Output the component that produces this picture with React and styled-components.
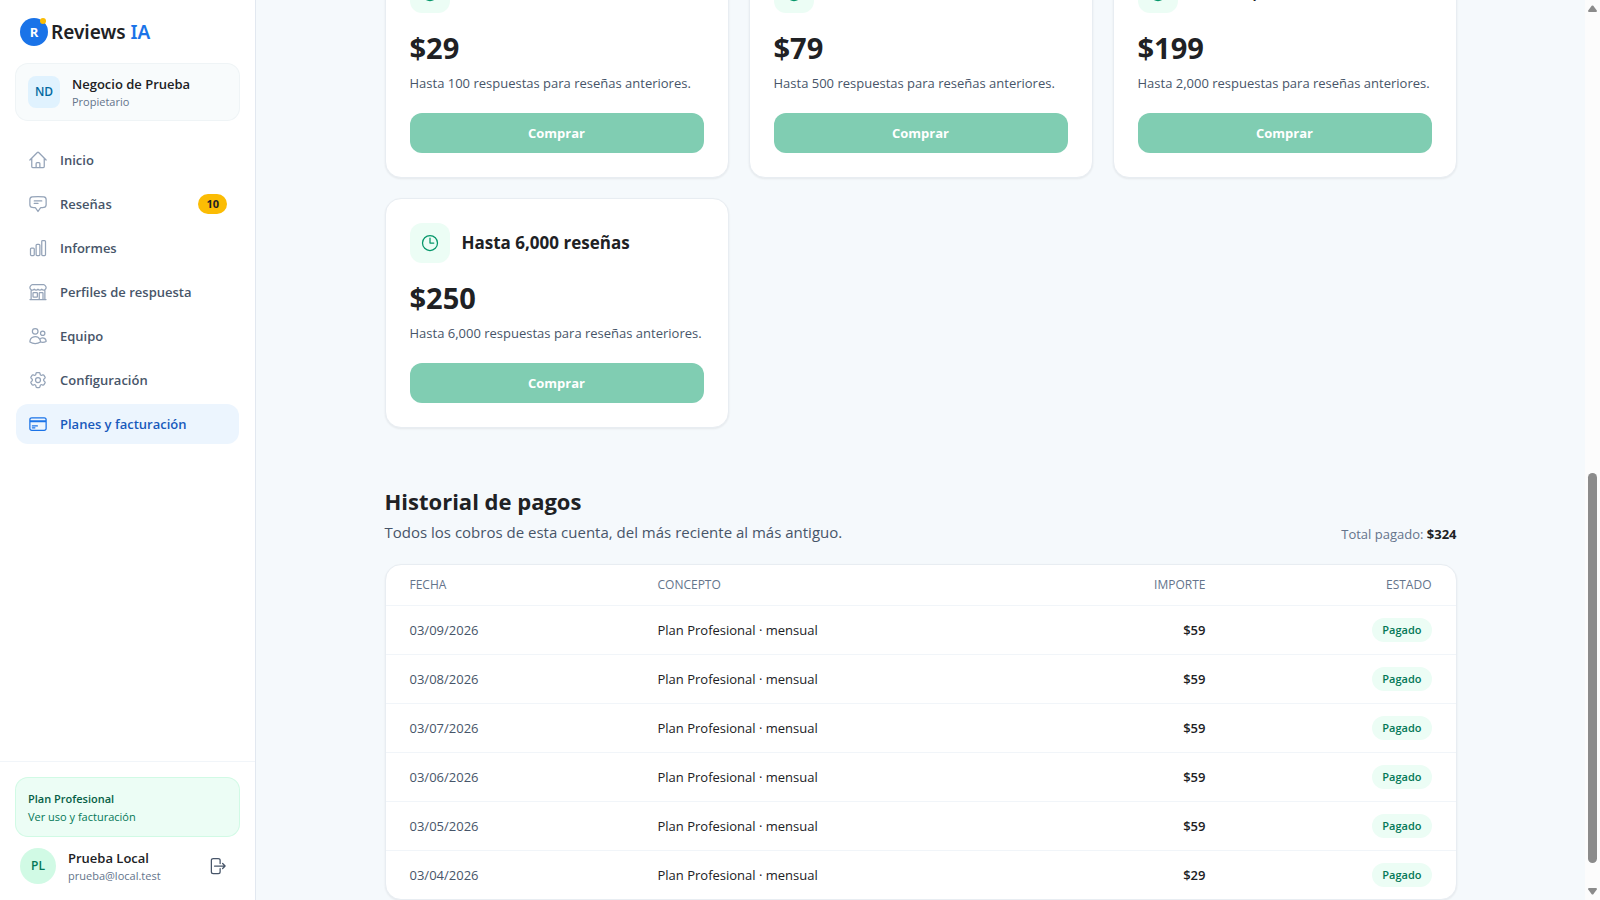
import styled, { createGlobalStyle } from "styled-components"

import {
  HiOutlineArrowRightOnRectangle,
  HiOutlineBuildingStorefront,
  HiOutlineChartBar,
  HiOutlineChatBubbleBottomCenterText,
  HiOutlineClock,
  HiOutlineCog6Tooth,
  HiOutlineCreditCard,
  HiOutlineHome,
  HiOutlineUsers
} from "react-icons/hi2"


const links = [
  { label: "Inicio", Icon: HiOutlineHome },
  { label: "Reseñas", Icon: HiOutlineChatBubbleBottomCenterText, count: 10 },
  { label: "Informes", Icon: HiOutlineChartBar },
  { label: "Perfiles de respuesta", Icon: HiOutlineBuildingStorefront },
  { label: "Equipo", Icon: HiOutlineUsers },
  { label: "Configuración", Icon: HiOutlineCog6Tooth },
  { label: "Planes y facturación", Icon: HiOutlineCreditCard, active: true }
]

const packs = [
  { amount: "100", price: "$29" },
  { amount: "500", price: "$79" },
  { amount: "2,000", price: "$199" },
  { amount: "6,000", price: "$250" }
]

const payments = [
  { date: "03/09/2026", total: "$59" },
  { date: "03/08/2026", total: "$59" },
  { date: "03/07/2026", total: "$59" },
  { date: "03/06/2026", total: "$59" },
  { date: "03/05/2026", total: "$59" },
  { date: "03/04/2026", total: "$29" }
]


const Sidebar = () => {

  return (

    <SidebarStyle>

      <Logo href="#inicio">

        <LogoMark>R</LogoMark>

        <LogoText>Reviews <span>IA</span></LogoText>

      </Logo>

      <Business>

        <BusinessInitials>ND</BusinessInitials>

        <div>
          <Name>Negocio de Prueba</Name>
          <Detail>Propietario</Detail>
        </div>

      </Business>

      <Nav>

        {links.map(({ label, Icon, count, active }) => (

          <NavLink key={label} href="#" $active={active} aria-current={active ? "page" : undefined}>
            <Icon />
            {label}
            {count && <Count>{count}</Count>}
          </NavLink>

        ))}

      </Nav>

      <SidebarFooter>

        <PlanLink href="#">
          <strong>Plan Profesional</strong>
          <span>Ver uso y facturación</span>
        </PlanLink>

        <User>

          <UserInitials>PL</UserInitials>

          <div>
            <Name>Prueba Local</Name>
            <Detail>prueba@local.test</Detail>
          </div>

          <LogoutButton type="button" aria-label="Cerrar sesión">
            <HiOutlineArrowRightOnRectangle />
          </LogoutButton>

        </User>

      </SidebarFooter>

    </SidebarStyle>

  )

}


const PackCard = ({ amount, price }) => {

  return (

    <Card>

      <CardHead>
        <CardIcon><HiOutlineClock /></CardIcon>
        <h3>Hasta {amount} reseñas</h3>
      </CardHead>

      <Price>{price}</Price>

      <Description>Hasta {amount} respuestas para reseñas anteriores.</Description>

      <BuyButton type="button">Comprar</BuyButton>

    </Card>

  )

}


const History = () => {

  return (

    <HistoryStyle>

      <HistoryHead>

        <div>
          <h2>Historial de pagos</h2>
          <p>Todos los cobros de esta cuenta, del más reciente al más antiguo.</p>
        </div>

        <Total>Total pagado: <strong>$324</strong></Total>

      </HistoryHead>

      <TableCard>

        <Table>

          <colgroup>
            <col className="date" />
            <col />
            <col className="amount" />
            <col className="status" />
          </colgroup>

          <thead>
            <tr>
              <th>Fecha</th>
              <th>Concepto</th>
              <th className="right">Importe</th>
              <th className="right">Estado</th>
            </tr>
          </thead>

          <tbody>

            {payments.map(({ date, total }) => (

              <tr key={date}>
                <td className="muted">{date}</td>
                <td>Plan Profesional · mensual</td>
                <td className="right total">{total}</td>
                <td className="right"><Status>Pagado</Status></td>
              </tr>

            ))}

          </tbody>

        </Table>

      </TableCard>

    </HistoryStyle>

  )

}


const App = () => {

  return (

    <Page>

      <GlobalStyle />

      <Sidebar />

      <Main>

        <Content>

          <Packs>
            {packs.map(pack => <PackCard key={pack.amount} {...pack} />)}
          </Packs>

          <History />

        </Content>

      </Main>

      <ScrollBar aria-hidden="true">
        <svg width="9" height="7" viewBox="0 0 9 7"><path d="M3.7 0.8Q4.5 0 5.3 0.8L8.8 5.6Q9.2 7 8 7H1Q-0.2 7 0.2 5.6Z" /></svg>
        <ScrollTrack><ScrollThumb /></ScrollTrack>
        <svg width="9" height="7" viewBox="0 0 9 7"><path d="M3.7 6.2Q4.5 7 5.3 6.2L8.8 1.4Q9.2 0 8 0H1Q-0.2 0 0.2 1.4Z" /></svg>
      </ScrollBar>

    </Page>

  )

}


const GlobalStyle = createGlobalStyle`

  *{
    box-sizing: border-box;
    margin: 0;
    padding: 0;
  }

  body{
    font-family: "Open Sans", "Noto Sans", sans-serif;
    font-size: 13px;
    line-height: 20px;
    color: #202124;
    background: #f5f9fc;
  }

  a{
    color: inherit;
    text-decoration: none;
  }

  button{
    font: inherit;
    border: 0 none;
    cursor: pointer;
  }

`

const Page = styled.div`
  display: flex;
  height: 100vh;
  overflow: hidden;
`

const SidebarStyle = styled.aside`
  width: 256px;
  flex-shrink: 0;
  display: flex;
  flex-direction: column;
  background: #ffffff;
  border-right: 1px solid #e2e8f0;
`

const Logo = styled.a`
  display: flex;
  align-items: center;
  gap: 3px;
  height: 64px;
  padding: 0 20px;
`

const LogoMark = styled.span`
  position: relative;
  width: 28px;
  height: 28px;
  display: flex;
  align-items: center;
  justify-content: center;
  border-radius: 50%;
  background: #1a73e8;
  color: #ffffff;
  font-size: 13px;
  font-weight: 700;

  &::after{
    content: "";
    position: absolute;
    top: 0;
    right: 2px;
    width: 6px;
    height: 6px;
    border-radius: 50%;
    background: #fbbc04;
  }
`

const LogoText = styled.span`
  font-family: "Noto Sans", "Open Sans", sans-serif;
  font-size: 19px;
  font-weight: 600;

  span{
    color: #1a73e8;
  }
`

const Business = styled.div`
  display: flex;
  align-items: center;
  gap: 12px;
  height: 56px;
  margin: 0 16px 20px;
  padding: 0 12px;
  border-radius: 12px;
  background: #f8fbfc;
  box-shadow: 0 0 0 1px #eff4f6;
`

const BusinessInitials = styled.span`
  width: 32px;
  height: 32px;
  display: flex;
  align-items: center;
  justify-content: center;
  border-radius: 8px;
  background: #e0f2fe;
  color: #0369a1;
  font-size: 12px;
  font-weight: 600;
`

const Name = styled.p`
  padding-top: 2px;
  line-height: 18px;
  font-weight: 600;
`

const Detail = styled.p`
  font-size: 11px;
  line-height: 18px;
  color: #64748b;
`

const Nav = styled.nav`
  flex: 1;
  display: flex;
  flex-direction: column;
  gap: 4px;
  padding: 0 16px;
`

const NavLink = styled.a`
  display: flex;
  align-items: center;
  gap: 12px;
  height: 40px;
  padding: 0 12px;
  border-radius: 12px;
  font-weight: 600;
  color: ${({ $active }) => $active ? "#185abc" : "#475569"};
  background: ${({ $active }) => $active ? "#ecf5fe" : "transparent"};

  svg{
    width: 20px;
    height: 20px;
    color: ${({ $active }) => $active ? "#1a73e8" : "#94a3b8"};
  }
`

const Count = styled.span`
  margin-left: auto;
  padding: 0 8px;
  border-radius: 10px;
  background: #fbbc04;
  color: #202124;
  font-size: 11px;
  font-weight: 700;
`

const SidebarFooter = styled.div`
  display: flex;
  flex-direction: column;
  gap: 12px;
  padding: 16px;
  border-top: 1px solid #f1f5f9;
`

const PlanLink = styled.a`
  display: flex;
  flex-direction: column;
  padding: 12px 12px 10px;
  border-radius: 12px;
  background: #ecfdf5;
  box-shadow: 0 0 0 1px #d1fae5;
  font-size: 11px;
  line-height: 18px;
  color: #047857;

  strong{
    font-weight: 600;
    color: #065f46;
  }
`

const User = styled.div`
  display: flex;
  align-items: center;
  gap: 12px;
  height: 36px;
  padding: 0 4px;
`

const UserInitials = styled.span`
  width: 36px;
  height: 36px;
  display: flex;
  align-items: center;
  justify-content: center;
  border-radius: 50%;
  background: #d1fae5;
  color: #047857;
  font-size: 12px;
  font-weight: 600;
`

const LogoutButton = styled.button`
  margin-left: auto;
  padding: 8px;
  display: flex;
  background: transparent;
  color: #475569;

  svg{
    width: 20px;
    height: 20px;
  }
`

const Main = styled.main`
  flex: 1;
  display: flex;
  flex-direction: column;
  justify-content: flex-end;
  align-items: center;
  padding: 0 24px;
`

const Content = styled.div`
  width: 100%;
  max-width: 1072px;
  display: flex;
  flex-direction: column;
  gap: 56px;
`

const Packs = styled.section`
  display: grid;
  grid-template-columns: repeat(3, 1fr);
  gap: 20px;
`

const Card = styled.article`
  padding: 24px;
  border: 1px solid #e8edf2;
  border-radius: 16px;
  background: #ffffff;
  box-shadow: 0 1px 2px rgba(32, 33, 36, .08);
`

const CardHead = styled.div`
  display: flex;
  align-items: center;
  gap: 12px;

  h3{
    font-size: 17px;
    line-height: 24px;
    font-weight: 700;
  }
`

const CardIcon = styled.span`
  width: 40px;
  height: 40px;
  display: flex;
  align-items: center;
  justify-content: center;
  border-radius: 12px;
  background: #ecfdf5;
  color: #059669;

  svg{
    width: 20px;
    height: 20px;
  }
`

const Price = styled.p`
  padding: 16px 0 6px;
  font-size: 29px;
  line-height: 38px;
  font-weight: 700;
`

const Description = styled.p`
  color: #475569;
`

const BuyButton = styled.button`
  width: 100%;
  height: 40px;
  margin-top: 20px;
  border-radius: 12px;
  background: #80cdb2;
  color: #ffffff;
  font-weight: 700;
`

const HistoryStyle = styled.section`
  display: flex;
  flex-direction: column;
  gap: 20px;
`

const HistoryHead = styled.div`
  display: flex;
  align-items: flex-end;
  justify-content: space-between;

  h2{
    padding-bottom: 2px;
    font-size: 22px;
    line-height: 34px;
    font-weight: 700;
  }

  p{
    font-size: 15px;
    line-height: 24px;
    color: #475569;
  }
`

const Total = styled.span`
  color: #64748b;

  strong{
    color: #202124;
    font-weight: 700;
  }
`

const TableCard = styled.div`
  border: 1px solid #e8edf2;
  border-radius: 16px;
  background: #ffffff;
  box-shadow: 0 1px 2px rgba(32, 33, 36, .08);
  overflow: hidden;
`

const Table = styled.table`
  width: 100%;
  table-layout: fixed;
  border-collapse: separate;
  border-spacing: 0;

  .date{
    width: 248px;
  }

  .amount{
    width: 180px;
  }

  .status{
    width: 226px;
  }

  th, td{
    padding: 0 24px;
    text-align: left;
  }

  th{
    height: 41px;
    font-size: 12px;
    font-weight: 500;
    text-transform: uppercase;
    color: #64748b;
    border-bottom: 1px solid #f1f5f9;
  }

  td{
    height: 49px;
    border-bottom: 1px solid #f1f5f9;
  }

  tr:last-child td{
    height: 48px;
    border-bottom: 0 none;
  }

  .muted{
    color: #475569;
  }

  .total{
    font-weight: 600;
  }

  .right{
    text-align: right;
  }
`

const Status = styled.span`
  display: inline-block;
  padding: 0 10px;
  border-radius: 12px;
  background: #ecfdf5;
  color: #047857;
  font-size: 11px;
  line-height: 24px;
  font-weight: 600;
`

const ScrollBar = styled.div`
  width: 15px;
  flex-shrink: 0;
  display: flex;
  flex-direction: column;
  align-items: center;
  gap: 3px;
  padding: 5px 0;
  background: #fcfcfc;

  svg{
    flex-shrink: 0;
    fill: #8b8b8b;
  }
`

const ScrollTrack = styled.div`
  flex: 1;
  display: flex;
  flex-direction: column;
  justify-content: flex-end;
  padding-bottom: 22px;
`

const ScrollThumb = styled.div`
  width: 9px;
  height: 46%;
  border-radius: 5px;
  background: #8b8b8b;
`


export default App
